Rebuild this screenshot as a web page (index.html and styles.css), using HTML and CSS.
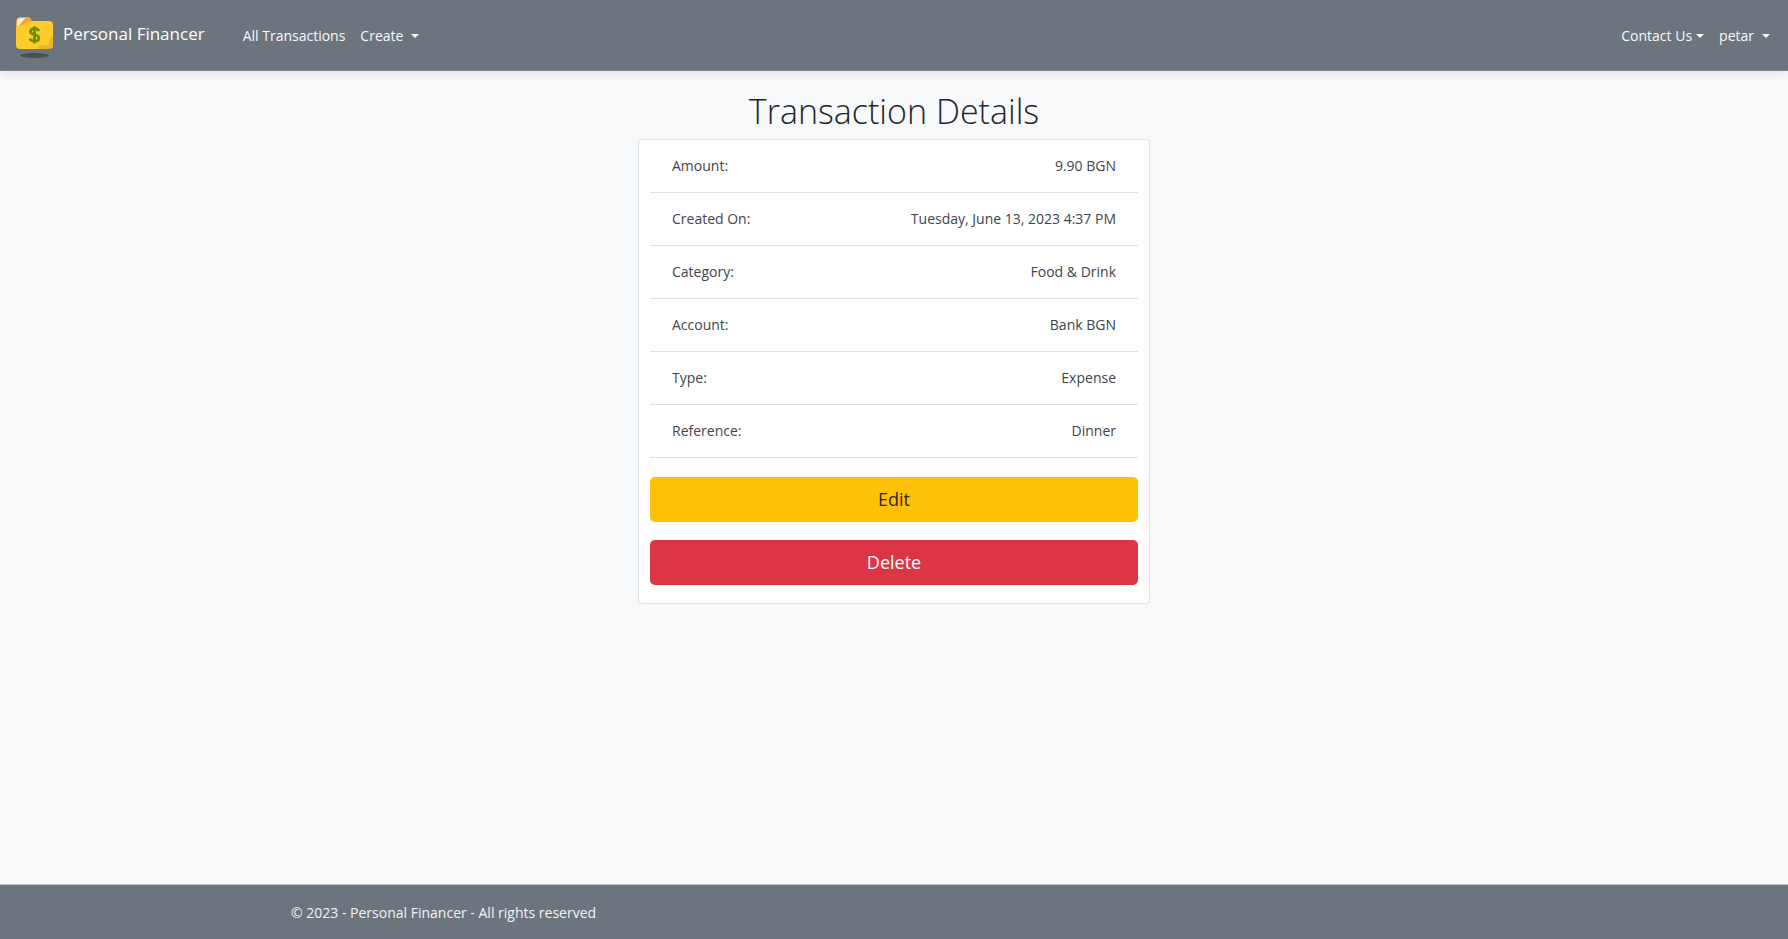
FILE: index.html
```html
<!DOCTYPE html>
<html lang="en">
<head>
<meta charset="utf-8">
<meta name="viewport" content="width=device-width, initial-scale=1">
<title>Transaction Details - Personal Financer</title>
<link rel="stylesheet" href="styles.css">
</head>
<body>
<header class="navbar">
  <a class="brand" href="#">
    <svg class="logo" viewBox="0 0 38 44" aria-hidden="true">
      <ellipse cx="18.500" cy="41.500" rx="14" ry="2.500" fill="#4b4f53"/>
      <path d="M0 8Q0 3 5 3H12Q15 3 16 8L17 14H0Z" fill="#f3a233"/>
      <path d="M1 8Q1 4 5 4H10Q8 5 6 8Q5 10 1 13Z" fill="#fff0d0"/>
      <path d="M0 15Q0 12 4 11.500Q8 11 9.500 9Q11 7 15 7H33Q37 7 37 11V31Q37 35 33 35H4Q0 35 0 31Z" fill="#fecd2b"/>
      <path d="M37 22V31Q37 35 33 35H21Q22 31.500 26 31.500H29Q33.500 31.500 33.500 27Q33.500 23 37 22Z" fill="#eab52a"/>
      <path d="M23 17Q21.500 14.500 18.500 14.500Q14.500 14.500 14.500 17.400Q14.500 19.600 18.500 20.500Q22.800 21.600 22.800 24.200Q22.800 27.200 18.500 27.200Q15 27.200 13.500 24.800M18.500 12.300V29.500" fill="none" stroke="#6c9000" stroke-width="2.700"/>
    </svg>
    <span>Personal Financer</span>
  </a>
  <nav class="links" aria-label="Main">
    <a class="link" href="#">All Transactions</a>
    <button class="link spaced" type="button">Create<span class="caret"></span></button>
  </nav>
  <nav class="links account" aria-label="Account">
    <button class="link" type="button">Contact Us<span class="caret"></span></button>
    <button class="link spaced" type="button">petar<span class="caret"></span></button>
  </nav>
</header>
<main class="main">
  <h1 class="title">Transaction Details</h1>
  <section class="card">
    <dl class="details">
      <div class="row"><dt>Amount:</dt><dd>9.90 BGN</dd></div>
      <div class="row"><dt>Created On:</dt><dd>Tuesday, June 13, 2023 4:37 PM</dd></div>
      <div class="row"><dt>Category:</dt><dd>Food &amp; Drink</dd></div>
      <div class="row"><dt>Account:</dt><dd>Bank BGN</dd></div>
      <div class="row"><dt>Type:</dt><dd>Expense</dd></div>
      <div class="row"><dt>Reference:</dt><dd>Dinner</dd></div>
    </dl>
    <div class="actions">
      <button class="btn edit" type="button">Edit</button>
      <button class="btn delete" type="button">Delete</button>
    </div>
  </section>
</main>
<footer class="footer">
  <p class="copyright">© 2023 - Personal Financer - All rights reserved</p>
</footer>
</body>
</html>
```
FILE: styles.css
```css
* { box-sizing: border-box; }
body {
  margin: 0;
  min-height: 100vh;
  display: flex;
  flex-direction: column;
  background: #f8f9fb;
  color: #40454a;
  font: 14px/20px "Open Sans", "Noto Sans", sans-serif;
}
.navbar {
  display: flex;
  align-items: center;
  padding: 14px 18px 12px 16px;
  background: #6c757d;
  border-bottom: 1px solid #7f878e;
  box-shadow: 0 2px 10px rgba(0, 0, 0, 0.1);
}
.brand {
  display: flex;
  align-items: center;
  gap: 9px;
  color: #fff;
  font-size: 17px;
  line-height: 24px;
  text-decoration: none;
}
.brand span { padding-bottom: 4px; }
.logo { width: 38px; height: 44px; }
.links { display: flex; gap: 15px; margin-left: 38px; }
.account { margin-left: auto; }
.link {
  display: flex;
  align-items: center;
  gap: 4px;
  padding: 0;
  border: 0;
  background: none;
  color: #f8f9fa;
  font: inherit;
  text-decoration: none;
  cursor: pointer;
}
.spaced { gap: 8px; }
.caret {
  border: 4px solid transparent;
  border-top-color: currentColor;
  border-bottom: 0;
}
.main { flex: 1; padding: 16px; }
.title {
  margin: 0;
  padding-bottom: 4px;
  text-align: center;
  color: #212529;
  font-size: 34px;
  line-height: 48px;
  font-weight: 300;
}
.card {
  max-width: 512px;
  margin: 0 auto;
  padding: 0 11px 18px;
  background: #fff;
  border: 1px solid #dfe2e5;
  border-radius: 4px;
}
.details { margin: 0; }
.row {
  display: flex;
  justify-content: space-between;
  padding: 16px 22px;
  border-bottom: 1px solid #dee2e6;
}
.row dd { margin: 0; }
.actions { display: grid; gap: 18px; padding-top: 19px; }
.btn {
  padding: 10px 16px;
  border: 0;
  border-radius: 5px;
  font: 18px/25px "Open Sans", "Noto Sans", sans-serif;
  cursor: pointer;
}
.edit { background: #ffc107; color: #30290f; }
.delete { background: #dc3545; color: #fff; }
.footer {
  padding: 18px 16px 16px;
  background: #6c757d;
  border-top: 1px solid #bfc5ca;
  color: #f1f3f5;
}
.copyright { max-width: 1206px; margin: 0 auto; }
```
